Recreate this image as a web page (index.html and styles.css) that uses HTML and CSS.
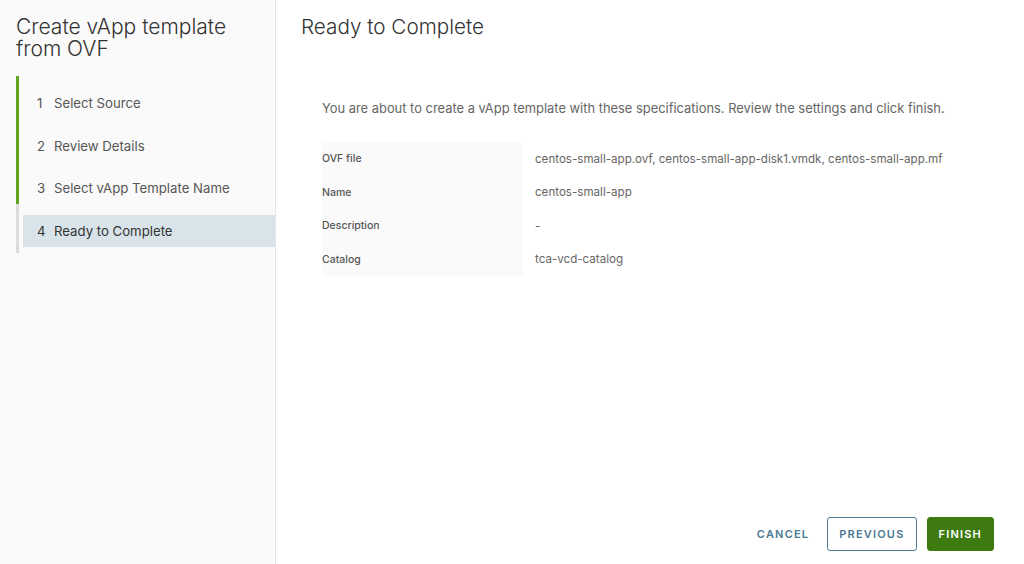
FILE: index.html
```html
<!DOCTYPE html>
<html>
<head>
<meta charset="utf-8">
<link rel="stylesheet" href="styles.css">
</head>
<body>
<div class="wizard">
  <aside class="side">
    <h1 class="wiz-title">Create vApp template from OVF</h1>
    <ol class="steps">
      <li class="step done"><span class="num">1</span><span>Select Source</span></li>
      <li class="step done"><span class="num">2</span><span>Review Details</span></li>
      <li class="step done"><span class="num">3</span><span>Select vApp Template Name</span></li>
      <li class="step active"><span class="num">4</span><span>Ready to Complete</span></li>
    </ol>
  </aside>
  <main class="main">
    <h2 class="page-title">Ready to Complete</h2>
    <div class="content">
      <p class="intro">You are about to create a vApp template with these specifications. Review the settings and click finish.</p>
      <div class="specs">
        <div class="lbl">OVF file</div><div class="val">centos-small-app.ovf, centos-small-app-disk1.vmdk, centos-small-app.mf</div>
        <div class="lbl">Name</div><div class="val">centos-small-app</div>
        <div class="lbl">Description</div><div class="val">-</div>
        <div class="lbl">Catalog</div><div class="val">tca-vcd-catalog</div>
      </div>
    </div>
    <div class="footer">
      <button class="btn btn-link">CANCEL</button>
      <button class="btn btn-outline">PREVIOUS</button>
      <button class="btn btn-primary">FINISH</button>
    </div>
  </main>
</div>
</body>
</html>
```
FILE: styles.css
```css
* { box-sizing: border-box; }
html, body { margin: 0; padding: 0; height: 100%; }
body {
  font-family: "Inter", "Open Sans", sans-serif;
  background: #fff;
  color: #333;
}
.wizard {
  display: flex;
  height: 564px;
}
.side {
  width: 276px;
  flex: none;
  background: #fafafa;
  border-right: 1px solid #e6e6e6;
  padding: 16px 0 0 16px;
}
.wiz-title {
  margin: 0;
  font-size: 21px;
  font-weight: 300;
  line-height: 22px;
  color: #333;
  max-width: 230px;
}
.steps {
  list-style: none;
  margin: 27px 0 0 0;
  padding: 0;
}
.step {
  display: flex;
  align-items: center;
  height: 32px;
  margin-bottom: 10.5px;
  padding-left: 18px;
  font-size: 13.2px;
  color: #565656;
  border-left: 3px solid #dcdcdc;
  position: relative;
}
.step.done { border-left-color: #62a420; }
.step.done::before {
  content: "";
  position: absolute;
  left: -3px;
  top: -11px;
  height: 11px;
  width: 3px;
  background: #62a420;
}
.step.active {
  color: #333;
  background: linear-gradient(to right, #fafafa 0, #fafafa 4px, #d9e4ea 4px);
  padding-left: 18px;
}
.step.active::after {
  content: "";
  position: absolute;
  left: -3px;
  bottom: -6px;
  height: 6px;
  width: 3px;
  background: #dcdcdc;
}
.step.active::before {
  content: "";
  position: absolute;
  left: -3px;
  top: -11px;
  height: 11px;
  width: 3px;
  background: #dcdcdc;
}
.num { width: 17px; flex: none; }
.main {
  flex: 1;
  display: flex;
  flex-direction: column;
  padding: 14px 30px 13px 25px;
}
.page-title {
  margin: 0;
  font-size: 20.7px;
  font-weight: 300;
  color: #333;
  line-height: 25px;
}
.content {
  flex: 1;
  padding: 62px 0 0 21px;
}
.intro {
  margin: 0 0 25px 0;
  font-size: 12.9px;
  color: #666;
  line-height: 16px;
}
.specs {
  display: grid;
  grid-template-columns: 201px 1fr;
  grid-auto-rows: 33.5px;
}
.lbl {
  background: #fafafa;
  font-size: 10.5px;
  font-weight: 500;
  color: #565656;
  display: flex;
  align-items: center;
}
.val {
  font-size: 11.6px;
  color: #666;
  padding-left: 12px;
  display: flex;
  align-items: center;
}
.footer {
  display: flex;
  justify-content: flex-end;
  gap: 10px;
}
.btn {
  font-family: inherit;
  font-size: 11px;
  font-weight: 600;
  letter-spacing: 1.2px;
  height: 34px;
  border-radius: 3px;
  padding: 0 11px;
  cursor: pointer;
}
.btn-link {
  background: none;
  border: 1px solid transparent;
  color: #4b7a92;
  padding-right: 7px;
}
.btn-outline {
  background: #fff;
  border: 1px solid #4b7a92;
  color: #4b7a92;
}
.btn-primary {
  background: #3d7b10;
  border: 1px solid #3d7b10;
  color: #fff;
}
```
